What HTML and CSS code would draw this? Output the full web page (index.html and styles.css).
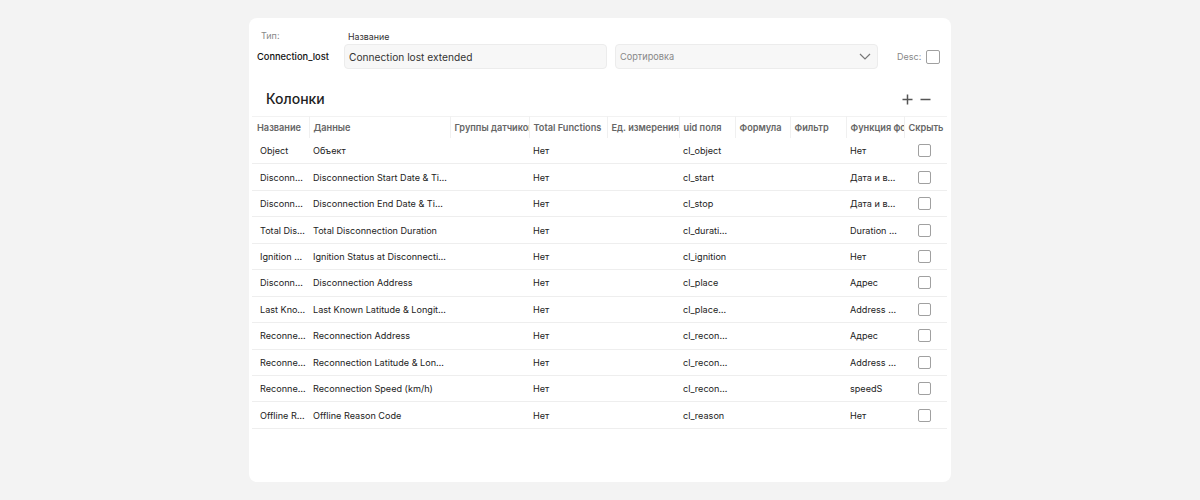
FILE: index.html
```html
<!DOCTYPE html>
<html lang="en">
<head>
    <meta charset="UTF-8">
    <meta name="viewport" content="width=device-width, initial-scale=1.0">
    <title>Report Template</title>
    <link rel="stylesheet" href="styles.css">
</head>
<body>
    <div class="card">
        <div class="top-row">
            <div class="type-block">
                <div class="type-label">Тип:</div>
                <div class="type-value">Connection_lost</div>
            </div>
            <div class="field">
                <label class="field-label" for="name">Название</label>
                <input class="text-input" type="text" id="name" value="Connection lost extended">
            </div>
            <div class="field">
                <div class="field-label">&nbsp;</div>
                <div class="select">
                    <span>Сортировка</span>
                    <svg class="chevron" width="12" height="7" viewBox="0 0 12 7"><path d="M1 1l5 5 5-5" fill="none" stroke="#777" stroke-width="1.2"/></svg>
                </div>
            </div>
            <div class="desc">
                <span>Desc:</span>
                <span class="checkbox big"></span>
            </div>
        </div>

        <div class="columns-head">
            <h2>Колонки</h2>
            <div class="actions">
                <svg width="11" height="11" viewBox="0 0 11 11"><path d="M5.5 0.5v10M0.5 5.5h10" stroke="#555" stroke-width="1.5"/></svg>
                <svg width="11" height="11" viewBox="0 0 11 11"><path d="M0.5 5.5h10" stroke="#555" stroke-width="1.5"/></svg>
            </div>
        </div>

        <table class="grid">
            <colgroup>
                <col style="width:57px">
                <col style="width:141px">
                <col style="width:79px">
                <col style="width:78px">
                <col style="width:72px">
                <col style="width:56px">
                <col style="width:55px">
                <col style="width:56px">
                <col style="width:58px">
                <col style="width:43px">
            </colgroup>
            <thead>
                <tr>
                    <th>Название</th>
                    <th>Данные</th>
                    <th>Группы датчиков</th>
                    <th>Total Functions</th>
                    <th>Ед. измерения</th>
                    <th>uid поля</th>
                    <th>Формула</th>
                    <th>Фильтр</th>
                    <th>Функция форматирования</th>
                    <th>Скрыть</th>
                </tr>
            </thead>
            <tbody>
                <tr><td>Object</td><td>Объект</td><td></td><td>Нет</td><td></td><td>cl_object</td><td></td><td></td><td>Нет</td><td><span class="checkbox"></span></td></tr>
                <tr><td>Disconnection Start</td><td>Disconnection Start Date &amp; Time</td><td></td><td>Нет</td><td></td><td>cl_start</td><td></td><td></td><td>Дата и время</td><td><span class="checkbox"></span></td></tr>
                <tr><td>Disconnection End</td><td>Disconnection End Date &amp; Time (UTC)</td><td></td><td>Нет</td><td></td><td>cl_stop</td><td></td><td></td><td>Дата и время</td><td><span class="checkbox"></span></td></tr>
                <tr><td>Total Disconnection</td><td>Total Disconnection Duration</td><td></td><td>Нет</td><td></td><td>cl_duration</td><td></td><td></td><td>Duration (hh:mm)</td><td><span class="checkbox"></span></td></tr>
                <tr><td>Ignition Status</td><td>Ignition Status at Disconnection</td><td></td><td>Нет</td><td></td><td>cl_ignition</td><td></td><td></td><td>Нет</td><td><span class="checkbox"></span></td></tr>
                <tr><td>Disconnection Address</td><td>Disconnection Address</td><td></td><td>Нет</td><td></td><td>cl_place</td><td></td><td></td><td>Адрес</td><td><span class="checkbox"></span></td></tr>
                <tr><td>Last Known Position</td><td>Last Known Latitude &amp; Longitude</td><td></td><td>Нет</td><td></td><td>cl_place_latlon</td><td></td><td></td><td>Address coords</td><td><span class="checkbox"></span></td></tr>
                <tr><td>Reconnection Address</td><td>Reconnection Address</td><td></td><td>Нет</td><td></td><td>cl_reconnect_place</td><td></td><td></td><td>Адрес</td><td><span class="checkbox"></span></td></tr>
                <tr><td>Reconnection Position</td><td>Reconnection Latitude &amp; Longitude</td><td></td><td>Нет</td><td></td><td>cl_reconnect_latlon</td><td></td><td></td><td>Address coords</td><td><span class="checkbox"></span></td></tr>
                <tr><td>Reconnection Speed</td><td>Reconnection Speed (km/h)</td><td></td><td>Нет</td><td></td><td>cl_reconnect_speed</td><td></td><td></td><td>speedS</td><td><span class="checkbox"></span></td></tr>
                <tr><td>Offline Reason</td><td>Offline Reason Code</td><td></td><td>Нет</td><td></td><td>cl_reason</td><td></td><td></td><td>Нет</td><td><span class="checkbox"></span></td></tr>
            </tbody>
        </table>
    </div>
</body>
</html>
```

FILE: styles.css
```css
/* page */
body {
    font-family: Inter, "Noto Sans", sans-serif;
    margin: 0;
    background: #f3f3f3;
    color: #222;
}
.card {
    width: 702px;
    height: 464px;
    margin: 18px 0 0 249px;
    background: #fff;
    border-radius: 8px;
    box-sizing: border-box;
    padding-top: 12px;
}

/* top fields */
.top-row {
    display: flex;
    align-items: flex-end;
    padding-left: 8px;
}
.type-block {
    width: 87px;
}
.type-label {
    font-size: 9px;
    color: #888;
    margin: 0 0 9px 4px;
    line-height: 12px;
}
.type-value {
    font-size: 9.3px;
    font-weight: 500;
    color: #111;
    line-height: 12px;
    margin-bottom: 6px;
}
.field {
    width: 263px;
    margin-right: 8px;
}
.field-label {
    display: block;
    font-size: 8.8px;
    color: #333;
    line-height: 12px;
    margin: 0 0 1px 4px;
}
.text-input, .select {
    width: 100%;
    height: 25px;
    box-sizing: border-box;
    border: 1px solid #ececec;
    border-radius: 4px;
    background: #f7f7f7;
    font-family: inherit;
    font-size: 10.2px;
    color: #333;
    padding: 0 4px;
    outline: none;
}
.select {
    display: flex;
    align-items: center;
    justify-content: space-between;
    font-size: 9.2px;
    color: #888;
    padding-right: 6px;
}
.desc {
    display: flex;
    align-items: center;
    gap: 5px;
    margin-left: 11px;
    height: 25px;
    font-size: 9px;
    color: #888;
}
.checkbox {
    display: inline-block;
    width: 11px;
    height: 11px;
    border: 1px solid #a0a0a0;
    border-radius: 2px;
    vertical-align: middle;
}
.checkbox.big {
    width: 12px;
    height: 12px;
}

/* columns header */
.columns-head {
    display: flex;
    align-items: center;
    justify-content: space-between;
    padding: 0 20px 0 17px;
    margin-top: 17px;
    height: 24px;
}
.columns-head h2 {
    margin: 0;
    font-size: 14px;
    font-weight: 500;
    color: #222;
}
.actions {
    display: flex;
    gap: 7px;
    padding-top: 2px;
}

/* table */
.grid {
    table-layout: fixed;
    border-collapse: collapse;
    width: 695px;
    margin: 6px 0 0 3px;
    font-size: 9.2px;
}
.grid th {
    height: 21px;
    padding: 0 4px;
    text-align: left;
    font-weight: 600;
    color: #666;
    white-space: nowrap;
    overflow: hidden;
    border-top: 1px solid #f2f2f2;
    border-right: 1px solid #f0f0f0;
}
.grid th:first-child {
    padding-left: 5px;
}
.grid th:last-child {
    border-right: none;
}
.grid td {
    height: 25.45px;
    padding: 0 3px 0 4px;
    white-space: nowrap;
    overflow: hidden;
    text-overflow: ellipsis;
    border-bottom: 1px solid #eeeeee;
    color: #222;
    font-size: 9.1px;
}
.grid td:first-child {
    padding-left: 8px;
}
.grid td:nth-child(6) {
    padding-right: 5px;
}
.grid td:nth-child(9) {
    padding-right: 6px;
}
.grid td:last-child {
    text-align: center;
    padding: 0 2px 0 0;
}
```
